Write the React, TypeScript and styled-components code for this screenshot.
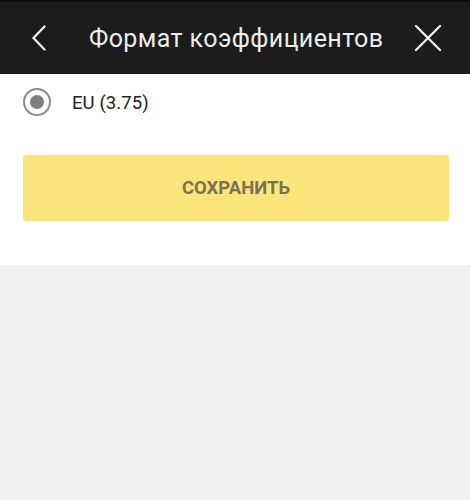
import React from "react";
import styled, { createGlobalStyle } from "styled-components";

const Global = createGlobalStyle`
  html, body { margin: 0; padding: 0; background: #f0f0f0; }
  body { font-family: Roboto, "Noto Sans", sans-serif; }
`;

const Page = styled.div`
  width: 470px;
  height: 500px;
  background: #f0f0f0;
  display: flex;
  flex-direction: column;
`;

const Header = styled.header`
  height: 74px;
  background: #1c1c1c;
  border-top: 2px solid #0c0c0c;
  box-sizing: border-box;
  display: flex;
  align-items: center;
  color: #ececec;
`;

const IconButton = styled.div<{ $w: number }>`
  width: ${(p) => p.$w}px;
  height: 72px;
  display: flex;
  align-items: center;
  justify-content: center;
  flex-shrink: 0;
`;

const Title = styled.h1`
  margin: 0;
  flex: 1;
  font-size: 25px;
  font-weight: 400;
  text-align: left;
  padding-left: 11px;
  letter-spacing: 0.4px;
  color: #ececec;
  white-space: nowrap;
`;

const Content = styled.div`
  background: #fff;
  padding: 14px 21px 44px 23px;
  display: flex;
  flex-direction: column;
`;

const RadioRow = styled.label`
  display: flex;
  align-items: center;
  gap: 21px;
  height: 28px;
  margin-bottom: 39px;
`;

const RadioOuter = styled.span`
  width: 28px;
  height: 28px;
  box-sizing: border-box;
  border-radius: 50%;
  border: 2.5px solid #8c8c8c;
  display: flex;
  align-items: center;
  justify-content: center;
`;

const RadioDot = styled.span`
  width: 14px;
  height: 14px;
  border-radius: 50%;
  background: #7f7f7f;
`;

const RadioLabel = styled.span`
  font-size: 18.5px;
  color: #222;
  margin-top: 1px;
  letter-spacing: 0.1px;
`;

const SaveButton = styled.button`
  height: 66px;
  width: 426px;
  border: none;
  border-radius: 4px;
  background: #fee57b;
  color: #7a7252;
  font-family: Roboto, "Noto Sans", sans-serif;
  font-weight: 700;
  font-size: 18.5px;
  letter-spacing: 0;
  box-shadow: 0 1px 3px rgba(230, 210, 120, 0.25);
  padding: 0;
`;

export default function App() {
  return (
    <>
      <Global />
      <Page>
        <Header>
          <IconButton $w={78}>
            <svg width="16" height="26" viewBox="0 0 16 26" fill="none">
              <path d="M13.5 1.5L2.5 13L13.5 24.5" stroke="#ececec" strokeWidth="2.4" strokeLinecap="round" strokeLinejoin="round" />
            </svg>
          </IconButton>
          <Title>Формат коэффициентов</Title>
          <IconButton $w={84}>
            <svg width="28" height="28" viewBox="0 0 28 28" fill="none">
              <path d="M2 2L26 26M26 2L2 26" stroke="#ececec" strokeWidth="2.4" strokeLinecap="round" />
            </svg>
          </IconButton>
        </Header>
        <Content>
          <RadioRow>
            <RadioOuter>
              <RadioDot />
            </RadioOuter>
            <RadioLabel>EU (3.75)</RadioLabel>
          </RadioRow>
          <SaveButton>СОХРАНИТЬ</SaveButton>
        </Content>
      </Page>
    </>
  );
}
